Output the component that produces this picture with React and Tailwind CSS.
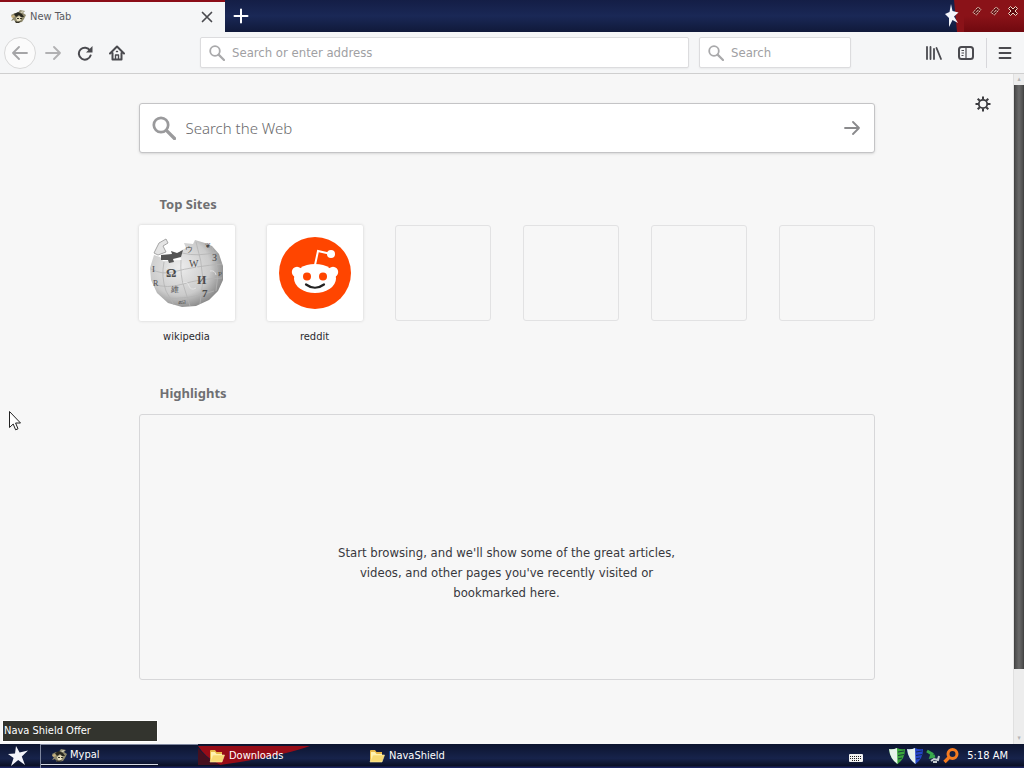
import React, { useState } from "react"

const emptySites = [1, 2, 3, 4]

const Star = ({ className }) => (
  <svg viewBox="0 0 20 20" className={className} fill="#f4f5fb">
    <path d="M8 0 L11.6 6.4 L20 4.5 L13.8 10.6 L17 19 L10.2 14 L3 20 L5.6 12 L0 8 L7 7.4 Z" />
  </svg>
)

const MypalIcon = ({ className }) => (
  <svg viewBox="0 0 16 16" className={className}>
    <path d="M1 6 L5 4 L7 5 L10 1 L15 2 L13 4 L16 6 L14 10 L12 13 L6 14 L4 11 L1 12 L3 9 Z" fill="#8f8a6e" />
    <path d="M4 5 L8 3 L12 5 L14 8 L11 8 L9 6 L6 8 Z" fill="#292820" />
    <path d="M6 9 L9 7 L12 9 L10 12 L7 12 Z" fill="#e8dfbd" />
    <path d="M1 7 L4 6 L5 8 L2 9 Z" fill="#c9b27c" />
    <path d="M7 9 H9 V10 H7 Z M10 9 H12 V10 H10 Z M5 12 L8 13 L11 12 L9 14 L6 14 Z" fill="#343126" />
    <path d="M10 3 L14 2 L12 4 Z" fill="#e5e1cd" />
  </svg>
)

const Magnifier = ({ className }) => (
  <svg viewBox="0 0 16 16" className={className} fill="none" stroke="currentColor">
    <circle cx="6" cy="6" r="4.8" strokeWidth="1.8" />
    <path d="M9.6 9.6 L15 15" strokeWidth="2.2" strokeLinecap="round" />
  </svg>
)

const Arrow = ({ className }) => (
  <svg viewBox="0 0 16 16" className={className} fill="none" stroke="currentColor" strokeWidth="1.8" strokeLinecap="round" strokeLinejoin="round">
    <path d="M1 8 H15 M9 2 L15 8 L9 14" />
  </svg>
)

const Folder = ({ className }) => (
  <svg viewBox="0 0 16 14" className={className}>
    <path d="M1 12 V2 Q1 1 2 1 H6 L7.5 3 H13 V6" fill="#e9b949" />
    <path d="M2 3 H6 L7.5 5 H13 V7 H4 L2 11 Z" fill="#fff3b0" />
    <path d="M1 13 L4 6 H15.5 L13 13 Z" fill="#f8da72" stroke="#fff0ad" strokeWidth="0.6" />
  </svg>
)

const Shield = ({ className }) => (
  <svg viewBox="0 0 16 16" className={className}>
    <path d="M0 1 Q4 2 8 0 Q12 2 16 1 Q16 11 8.5 16 Q1 11 0 1 Z" fill="currentColor" />
    <path d="M0 1 Q4 2 8 0 L8.5 16 Q1 11 0 1 Z" fill="#e6f3ea" />
    <path d="M9 4 L15 3 M9 7.5 L15 6.5 M9 11 L13 10" stroke="#0e2338" strokeWidth="0.8" />
  </svg>
)

const WindowGlyph = () => (
  <svg viewBox="0 0 10 10" className="h-2.5 w-2.5" fill="#5d080c" stroke="currentColor" strokeWidth="1">
    <path d="M1 6.5 L6 1 L9 3.5 L4.5 9 Z" strokeDasharray="1.6 0.6" />
    <path d="M4 6.5 L6.5 3.8" />
  </svg>
)

const WikipediaLogo = () => (
  <svg viewBox="0 0 76 76" className="h-[76px] w-[76px]" aria-hidden="true">
    <defs>
      <radialGradient id="globe" cx="0.4" cy="0.4" r="0.65">
        <stop offset="0" stopColor="#ededed" />
        <stop offset="0.65" stopColor="#cbcbcb" />
        <stop offset="1" stopColor="#858585" />
      </radialGradient>
    </defs>
    <path d="M5 20 L11 22 L14 26 L32 25 L31 16 L37 13 L35 8 L44 9 L46 5 L56 8 L63 11 L70 19 L74 31 L74 45 L69 56 L60 65 L47 71 L33 72 L19 68 L8 58 L2 45 L1 33 Z" fill="url(#globe)" />
    <path d="M5 18 L10 8 L17 4 L19 8 L14 11 L17 17 L9 20 Z" fill="#e4e4e4" stroke="#a5a5a5" />
    <path d="M12 20 L23 19 L22 16 L28 18 L34 15 L32 22 L24 24 L25 27 L20 28 L19 25 L12 25 Z" fill="#555" />
    <g fill="none" stroke="#b4b4b4" strokeWidth="0.8">
      <path d="M15 27 Q12 42 17 56 L25 70 M32 25 Q31 40 35 52 L41 71 M47 7 Q53 26 54 45 L51 69 M63 12 Q71 34 67 56" />
      <path d="M2 34 Q13 40 24 37 T48 32 T73 29 M4 49 Q18 54 34 49 T73 43 M15 63 Q39 65 65 56 M33 18 Q49 22 68 17" />
    </g>
    <g fill="none" stroke="#e9e9e9" strokeWidth="0.8">
      <path d="M17 34 Q20 30 24 34 Q28 37 25 42 M42 29 Q46 26 48 33 M34 48 Q39 46 40 51 Q42 56 47 53 M61 36 Q66 35 67 40" />
    </g>
    <g fill="#4b4b4b" className="font-['Liberation_Serif',serif]">
      <text x="17" y="42" fontSize="13" fontWeight="bold">Ω</text>
      <text x="40" y="32" fontSize="10">W</text>
      <text x="48" y="49" fontSize="12" fontWeight="bold">И</text>
      <text x="22" y="57" fontSize="8">維</text>
      <text x="53" y="62" fontSize="11" fontWeight="bold">7</text>
      <text x="63" y="26" fontSize="10">З</text>
      <text x="36" y="17" fontSize="8">ウ</text>
      <text x="56" y="13" fontSize="7">❦</text>
      <text x="3" y="37" fontSize="9">I</text>
      <text x="4" y="51" fontSize="8">R</text>
      <text x="29" y="69" fontSize="7">வி</text>
      <text x="69" y="41" fontSize="7">P</text>
    </g>
  </svg>
)

const RedditLogo = () => (
  <svg viewBox="0 0 72 72" className="h-[72px] w-[72px]" aria-hidden="true">
    <circle cx="36" cy="36" r="36" fill="#ff4500" />
    <path d="M36 28 L39 14 L52 17" fill="none" stroke="#fff" strokeWidth="2" />
    <circle cx="52" cy="17" r="4" fill="#fff" />
    <circle cx="18" cy="35" r="5.2" fill="#fff" />
    <circle cx="54" cy="35" r="5.2" fill="#fff" />
    <ellipse cx="36" cy="41.5" rx="21" ry="14.5" fill="#fff" />
    <circle cx="28" cy="39.5" r="4" fill="#ff4500" />
    <circle cx="44" cy="39.5" r="4" fill="#ff4500" />
    <path d="M27 47.5 Q36 54 45 47.5" fill="none" stroke="#222" strokeWidth="2.2" strokeLinecap="round" />
  </svg>
)

const sites = [
  { name: "wikipedia", href: "#wikipedia", Logo: WikipediaLogo },
  { name: "reddit", href: "#reddit", Logo: RedditLogo },
]

const TitleBar = () => (
  <header className="flex h-8 bg-[linear-gradient(#141e46,#1a2856_50%,#10193a)]">
    <div className="flex w-[225px] items-center border-t-2 border-[#8b0d18] bg-[#f5f6f7] px-2.5">
      <MypalIcon className="h-4 w-4" />
      <span className="ml-1 flex-1 text-[11px] text-[#5a5a5f]">New Tab</span>
      <button aria-label="Close tab" className="p-0.5 text-[#4a4a4f]">
        <svg viewBox="0 0 12 12" className="h-3 w-3" fill="none" stroke="currentColor" strokeWidth="1.7" strokeLinecap="round">
          <path d="M1.5 1.5 L10.5 10.5 M10.5 1.5 L1.5 10.5" />
        </svg>
      </button>
    </div>
    <button aria-label="New tab" className="px-2 text-white">
      <svg viewBox="0 0 16 16" className="h-4 w-4" stroke="currentColor" strokeWidth="2" strokeLinecap="round">
        <path d="M8 1.5 V14.5 M1.5 8 H14.5" />
      </svg>
    </button>
    <div className="flex-1" />
    <svg viewBox="0 0 24 32" className="h-8 w-6" aria-hidden="true">
      <path d="M14 0 H24 V32 H17 Z" fill="#8a1218" />
      <path d="M11 4 L12.5 11 L18.5 12.5 L14 16.5 L18 23 L12.5 20 L9 27 L9 18 L5 14 L9.5 12 Z" fill="#f4f5fb" />
    </svg>
    <div className="flex items-start gap-2 bg-[linear-gradient(#8a1218,#8a1218_50%,#70090f)] pl-2 pr-1.5 pt-1.5 text-[#f0d9c8]">
      <button aria-label="Minimize">
        <WindowGlyph />
      </button>
      <button aria-label="Restore">
        <WindowGlyph />
      </button>
      <button aria-label="Close window">
        <svg viewBox="0 0 10 10" className="h-2.5 w-2.5" fill="#5d080c" stroke="currentColor" strokeWidth="1">
          <path d="M0.5 2.5 L2.5 0.5 L5 3 L7.5 0.5 L9.5 2.5 L7 5 L9.5 7.5 L7.5 9.5 L5 7 L2.5 9.5 L0.5 7.5 L3 5 Z" />
        </svg>
      </button>
    </div>
  </header>
)

const Toolbar = () => {
  const [address, setAddress] = useState("")
  const [query, setQuery] = useState("")

  return (
    <nav className="flex h-[42px] items-center border-b border-[#cfcfcf] bg-[#f5f6f7] pl-1 pr-[9px] text-[#4a4a4f]">
      <button aria-label="Back" className="flex h-8 w-8 items-center justify-center rounded-full border border-[#d8d8d8] bg-[#fbfbfb] text-[#a5a5a7]">
        <Arrow className="h-4 w-4 rotate-180" />
      </button>
      <button aria-label="Forward" className="ml-[7px] p-0.5 text-[#b1b1b3]">
        <Arrow className="h-4 w-4" />
      </button>
      <button aria-label="Reload" className="ml-3 p-0.5">
        <svg viewBox="0 0 16 16" className="h-4 w-4" fill="none" stroke="currentColor" strokeWidth="2">
          <path d="M13 5.5 A6 6 0 1 0 13.6 10.5" strokeLinecap="round" />
          <path d="M15.5 1 V7.5 H9 Z" fill="currentColor" stroke="none" />
        </svg>
      </button>
      <button aria-label="Home" className="ml-3 p-0.5">
        <svg viewBox="0 0 16 16" className="h-4 w-4" fill="none" stroke="currentColor" strokeWidth="2" strokeLinecap="round" strokeLinejoin="round">
          <path d="M1 8.5 L8 1.5 L15 8.5 M3.5 8 V14.5 H12.5 V8" />
          <path d="M6.5 14 V10 H9.5 V14" strokeWidth="1.4" />
          <path d="M7.5 6.5 H8.5" strokeWidth="1.4" />
        </svg>
      </button>
      <label className="ml-[73px] flex h-[31px] flex-1 items-center rounded-xs border border-[#dcdcde] bg-white px-2 shadow-xs">
        <Magnifier className="h-4 w-4 text-[#a9a9ab]" />
        <input
          type="text"
          aria-label="Search or enter address"
          placeholder="Search or enter address"
          value={address}
          onChange={e => setAddress(e.target.value)}
          className="ml-[7px] min-w-0 flex-1 text-[13px] outline-none placeholder:text-[#a0a0a3]"
        />
      </label>
      <label className="ml-2.5 mr-[73px] flex h-[31px] w-[152px] items-center rounded-xs border border-[#dcdcde] bg-white px-2 shadow-xs">
        <Magnifier className="h-4 w-4 text-[#a9a9ab]" />
        <input
          type="text"
          aria-label="Search"
          placeholder="Search"
          value={query}
          onChange={e => setQuery(e.target.value)}
          className="ml-[7px] min-w-0 flex-1 text-[13px] outline-none placeholder:text-[#a0a0a3]"
        />
      </label>
      <button aria-label="Library" className="p-0.5">
        <svg viewBox="0 0 16 16" className="h-4 w-4" fill="none" stroke="currentColor" strokeLinecap="round">
          <path d="M1 2 V14 M4.5 2 V14 M8 4 V14" strokeWidth="1.8" />
          <path d="M10.5 3 L15 14" strokeWidth="1.8" />
        </svg>
      </button>
      <button aria-label="Sidebars" className="ml-3 p-0.5">
        <svg viewBox="0 0 16 16" className="h-4 w-4" fill="none" stroke="currentColor" strokeWidth="2">
          <rect x="1" y="2" width="14" height="12" rx="2.5" />
          <path d="M8 2 V14" strokeWidth="1.2" />
          <path d="M3.5 5.5 H6 M3.5 8 H6 M3.5 10.5 H5.5" strokeWidth="1" />
        </svg>
      </button>
      <div className="ml-2.5 h-[30px] w-px bg-[#d7d7db]" />
      <button aria-label="Open menu" className="ml-2 p-0.5">
        <svg viewBox="0 0 16 16" className="h-4 w-4" stroke="currentColor" strokeWidth="1.8" strokeLinecap="round">
          <path d="M2.5 3 H13.5 M2.5 8 H13.5 M2.5 13 H13.5" />
        </svg>
      </button>
    </nav>
  )
}

const Scrollbar = () => (
  <div className="flex w-[11px] flex-col border-l border-[#e0e0e0] bg-[#ededed]" aria-hidden="true">
    <div className="h-[11px] text-center text-[7px] leading-[11px] text-[#b5b5b5]">▴</div>
    <div className="flex-[584] border-x border-[#444] bg-[linear-gradient(90deg,#4d4d4d,#6a6a6a,#4d4d4d)]" />
    <div className="flex-[64]" />
    <div className="h-[11px] text-center text-[7px] leading-[11px] text-[#b5b5b5]">▾</div>
  </div>
)

const NewTabPage = () => {
  const [term, setTerm] = useState("")

  return (
    <main className="relative flex-1 pb-16 pt-[29px]">
      <button aria-label="Customize your page" className="absolute right-[22px] top-[22px] text-[#3c3c40]">
        <svg viewBox="0 0 16 16" className="h-4 w-4" fill="none" stroke="currentColor">
          <circle cx="8" cy="8" r="4.2" strokeWidth="1.8" />
          <path d="M8 0.5 V3.5 M8 12.5 V15.5 M0.5 8 H3.5 M12.5 8 H15.5 M2.7 2.7 L4.8 4.8 M11.2 11.2 L13.3 13.3 M2.7 13.3 L4.8 11.2 M11.2 4.8 L13.3 2.7" strokeWidth="2" />
        </svg>
      </button>

      <div className="mx-auto max-w-[736px]">
        {/* Search */}
        <form onSubmit={e => e.preventDefault()} className="flex h-[50px] items-center rounded-[3px] border border-[#c4c4c6] bg-white pl-3 pr-3.5 shadow-sm">
          <Magnifier className="h-6 w-6 text-[#9a9a9c]" />
          <input
            type="text"
            aria-label="Search the Web"
            placeholder="Search the Web"
            value={term}
            onChange={e => setTerm(e.target.value)}
            className="ml-2.5 min-w-0 flex-1 font-['Noto_Sans',sans-serif] text-[15px] font-light outline-none placeholder:text-[#6a6a6c]"
          />
          <button aria-label="Search" className="text-[#8a8a8c]">
            <Arrow className="h-4 w-4" />
          </button>
        </form>

        {/* Top sites */}
        <section className="mt-10">
          <h2 className="pl-[21px] font-['Noto_Sans',sans-serif] text-[13px] font-bold leading-[22px] text-[#6f6f72]">Top Sites</h2>
          <ul className="mt-2.5 flex justify-between">
            {sites.map(({ name, href, Logo }) => (
              <li key={name}>
                <a href={href} className="block text-center text-[11px] leading-4 text-[#2a2a2e]">
                  <span className="mb-2 flex h-24 w-24 items-center justify-center rounded-xs bg-white shadow-[0_0_3px_#ccc]">
                    <Logo />
                  </span>
                  {name}
                </a>
              </li>
            ))}
            {emptySites.map(n => (
              <li key={n} className="h-24 w-24 rounded-[3px] border border-[#e2e2e3]" />
            ))}
          </ul>
        </section>

        {/* Highlights */}
        <section className="mt-[37px]">
          <h2 className="pl-[21px] font-['Noto_Sans',sans-serif] text-[13px] font-bold leading-[22px] text-[#6f6f72]">Highlights</h2>
          <div className="mt-2.5 flex h-[266px] justify-center rounded-[3px] border border-[#d7d7d9] pt-32">
            <p className="w-[350px] text-center text-[13px] leading-5 text-[#38383d]">
              Start browsing, and we'll show some of the great articles, videos, and other pages you've recently visited or bookmarked here.
            </p>
          </div>
        </section>
      </div>
    </main>
  )
}

const Taskbar = () => (
  <footer className="flex h-6 items-stretch bg-[linear-gradient(#0c142e,#17234b_60%,#0a1026_90%,#202a6e)] text-[11px] text-white">
    <button aria-label="Start" className="w-10 pl-2">
      <Star className="h-5 w-5" />
    </button>
    <div className="w-[158px] border-l border-t border-[#7f879f]">
      <button className="flex h-5 w-[117px] items-center border-b border-[#d5d8e4] pl-2.5 pt-0.5">
        <MypalIcon className="h-4 w-4" />
        <span className="ml-[3px]">Mypal</span>
      </button>
    </div>
    <button className="relative flex w-[160px] items-center pl-[11px]">
      <svg viewBox="0 0 112 22" className="absolute left-0 top-0 h-[22px] w-28" aria-hidden="true">
        <path d="M0 2 H112 Q84 12 22 21 Q8 14 0 2 Z" fill="#970c17" />
        <path d="M0 4 L0 21 L22 21 Q8 14 0 4 Z" fill="#45101f" />
      </svg>
      <Folder className="relative h-3.5 w-4" />
      <span className="relative ml-1">Downloads</span>
    </button>
    <button className="flex items-center pl-[11px]">
      <Folder className="h-3.5 w-4" />
      <span className="ml-1">NavaShield</span>
    </button>
    <div className="flex-1" />
    <div className="flex items-center pr-4">
      <svg viewBox="0 0 14 8" className="mr-[26px] mt-1 h-2 w-3.5" aria-hidden="true">
        <rect width="14" height="8" rx="1" fill="#f2f2f2" />
        <path d="M1 2.5 H13 M1 4.5 H13 M3 6.5 H11" stroke="#222" strokeWidth="1" strokeDasharray="1 1" />
      </svg>
      <Shield className="h-4 w-4 text-[#3aa63c]" />
      <Shield className="ml-0.5 h-4 w-4 text-[#2345c9]" />
      <svg viewBox="0 0 16 16" className="ml-0.5 h-4 w-4" fill="none" aria-hidden="true">
        <path d="M2 3 L7 6 L6 9 L10 8" stroke="#38a84c" strokeWidth="3" />
        <path d="M6 13 L9 11 L13 12 L14 8 M8 14 L12 14" stroke="#c5ccd0" strokeWidth="2" />
      </svg>
      <svg viewBox="0 0 16 16" className="ml-0.5 h-4 w-4" fill="none" stroke="#f47b20" aria-hidden="true">
        <circle cx="9.5" cy="6" r="4.5" strokeWidth="3" />
        <path d="M6 9.5 L1.5 14" strokeWidth="3.4" />
      </svg>
      <span className="ml-2">5:18 AM</span>
    </div>
  </footer>
)

const App = () => {
  return (
    <div className="relative flex min-h-screen flex-col bg-[#f7f7f7] font-['DejaVu_Sans_Condensed','Noto_Sans',sans-serif]">
      <TitleBar />
      <Toolbar />
      <div className="flex flex-1">
        <NewTabPage />
        <Scrollbar />
      </div>
      <Taskbar />

      {/* Taskbar tooltip */}
      <div role="tooltip" className="absolute bottom-[26px] left-0.5 h-[22px] w-[156px] border border-white bg-[#33342e] px-px text-[11px] leading-5 text-white">
        Nava Shield Offer
      </div>

      {/* Mouse pointer */}
      <svg viewBox="0 0 12 20" className="absolute left-[9px] top-[411px] h-5 w-3" aria-hidden="true">
        <path d="M0.5 0.5 V16.5 L4.2 13 L6.6 18.8 L9 17.8 L6.6 12 H11.5 Z" fill="#fff" stroke="#222" strokeWidth="1" />
      </svg>
    </div>
  )
}

export default App
